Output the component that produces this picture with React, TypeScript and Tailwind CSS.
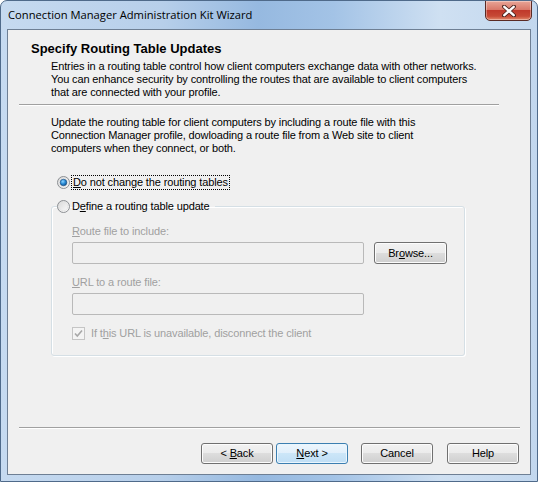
import React from "react";

const Radio = ({ checked }: { checked?: boolean }) => (
  <svg width="13" height="13" viewBox="0 0 13 13" className="shrink-0">
    <defs>
      <linearGradient id={checked ? "rg1" : "rg0"} x1="0" y1="0" x2="1" y2="1">
        <stop offset="0" stopColor="#d6d6d6" />
        <stop offset="1" stopColor="#ffffff" />
      </linearGradient>
      <radialGradient id="dot" cx="0.4" cy="0.35" r="0.7">
        <stop offset="0" stopColor="#8fd3ff" />
        <stop offset="0.5" stopColor="#2b8ed8" />
        <stop offset="1" stopColor="#0b4d8c" />
      </radialGradient>
    </defs>
    <circle cx="6.5" cy="6.5" r="6" fill={`url(#${checked ? "rg1" : "rg0"})`} stroke="#8c8f93" strokeWidth="1" />
    <circle cx="6.5" cy="6.5" r="4.3" fill="none" stroke="#e2e2e2" strokeWidth="0.8" />
    {checked && <circle cx="6.5" cy="6.5" r="3.3" fill="url(#dot)" stroke="#1b4e80" strokeWidth="0.6" />}
  </svg>
);

const Btn = ({ children, def, className = "" }: { children: React.ReactNode; def?: boolean; className?: string }) => (
  <div
    className={`h-[21px] w-[72px] flex items-center justify-center rounded-[3px] border text-[11px] text-black ${
      def
        ? "border-[#3c7fb1] bg-[linear-gradient(#edf6fd_0%,#e0effb_50%,#cce6f8_50%,#bfdef5_100%)] shadow-[inset_0_0_0_1px_#eaf6fd]"
        : "border-[#707070] bg-[linear-gradient(#f2f2f2_0%,#ebebeb_50%,#dddddd_50%,#cfcfcf_100%)] shadow-[inset_0_0_0_1px_#fcfcfc]"
    } ${className}`}
  >
    <span className="whitespace-pre">{children}</span>
  </div>
);

export default function App() {
  return (
    <div
      className="w-[538px] h-[482px] flex flex-col rounded-t-[7px] border border-[#4f6a8a] bg-[linear-gradient(90deg,#c6daf0_0%,#b7cfea_30%,#96b9e0_48%,#a3c3e6_62%,#cfe0f2_82%,#c2d7ee_100%)] overflow-hidden"
      style={{ fontFamily: '"Liberation Sans", Arial, sans-serif' }}
    >
      {/* title bar */}
      <div className="h-[28px] flex items-start shrink-0">
        <div
          className="pl-[7px] pt-[6px] text-[11.2px] leading-[16px] text-black"
          style={{ fontFamily: '"Open Sans", "Liberation Sans", sans-serif' }}
        >
          Connection Manager Administration Kit Wizard
        </div>
        <div className="ml-auto mr-[5px] -mt-px w-[47px] h-[21px] rounded-b-[5px] border border-[#5a2a24] bg-[linear-gradient(#e8a597_0%,#d9796a_45%,#c0392b_50%,#c74a36_80%,#e48c6d_100%)] flex items-center justify-center shadow-[inset_0_0_0_1px_rgba(255,255,255,0.35)]">
          <svg width="14" height="12" viewBox="0 0 14 12">
            <path d="M2 1.5 L12 10.5 M12 1.5 L2 10.5" stroke="#4b2520" strokeWidth="4" strokeLinecap="round" />
            <path d="M2.3 1.8 L11.7 10.2 M11.7 1.8 L2.3 10.2" stroke="#ffffff" strokeWidth="2.4" strokeLinecap="round" />
          </svg>
        </div>
      </div>

      {/* client area */}
      <div className="flex-1 mx-[6px] mb-[6px] border border-[#6e7f94] bg-[#f0f0f0] flex flex-col text-[11px] leading-[13px] tracking-[-0.13px] text-black">
        {/* header */}
        <div className="pl-[23px] pt-[11px] text-[13px] leading-[16px] font-bold tracking-normal">Specify Routing Table Updates</div>
        <div className="pl-[43px] mt-[3px]">
          <div>Entries in a routing table control how client computers exchange data with other networks.</div>
          <div>You can enhance security by controlling the routes that are available to client computers</div>
          <div>that are connected with your profile.</div>
        </div>
        <div className="ml-[11px] w-[480px] mt-[5px] h-[2px] border-t border-[#a0a0a0] border-b border-b-white" />

        {/* body */}
        <div className="pl-[43px] mt-[10px]">
          <div>Update the routing table for client computers by including a route file with this</div>
          <div>Connection Manager profile, dowloading a route file from a Web site to client</div>
          <div>computers when they connect, or both.</div>
        </div>

        <div className="ml-[49px] mt-[19px] h-[16px] flex items-center gap-px">
          <Radio checked />
          <span className="border border-dotted border-black px-px leading-[13px]">
            <u>D</u>o not change the routing tables
          </span>
        </div>

        <fieldset className="ml-[43px] mt-[8px] w-[414px] h-[158px] border border-[#d5dfe5] rounded-[3px] pl-[20px] shadow-[inset_1px_1px_0_#ffffff,1px_1px_0_#ffffff]">
          <legend className="-ml-[15px] pr-[5px] flex items-center gap-px h-[16px]">
            <Radio />
            <span className="pl-px">
              D<u>e</u>fine a routing table update
            </span>
          </legend>
          <div className="text-[#a0a0a0] mt-[11px]">
            <u>R</u>oute file to include:
          </div>
          <div className="flex items-center gap-[10px] mt-[4px]">
            <div className="w-[292px] h-[22px] border border-[#b9b9b9] rounded-[2px] bg-[#f0f0f0]" />
            <Btn className="w-[73px] h-[22px]">
              Br<u>o</u>wse...
            </Btn>
          </div>
          <div className="text-[#a0a0a0] mt-[12px]">
            <u>U</u>RL to a route file:
          </div>
          <div className="w-[292px] h-[22px] mt-[4px] border border-[#b9b9b9] rounded-[2px] bg-[#f0f0f0]" />
          <div className="flex items-center gap-[6px] mt-[12px] text-[#a0a0a0]">
            <svg width="13" height="13" viewBox="0 0 13 13" className="shrink-0">
              <rect x="0.5" y="0.5" width="12" height="12" fill="#f4f4f4" stroke="#c5c5c5" />
              <path d="M3 6.5 L5.3 9 L10 3.5" fill="none" stroke="#a8a8a8" strokeWidth="1.6" />
            </svg>
            <span>
              If t<u>h</u>is URL is unavailable, disconnect the client
            </span>
          </div>
        </fieldset>

        {/* footer */}
        <div className="mt-auto">
          <div className="ml-[11px] w-[501px] h-[2px] border-t border-[#a0a0a0] border-b border-b-white" />
          <div className="flex items-center mt-[14px] mb-[10px] pl-[193px]">
            <Btn>
              {"< "}<u>B</u>ack
            </Btn>
            <Btn def className="ml-[3px]">
              <u>N</u>ext {">"}
            </Btn>
            <Btn className="ml-[13px]">Cancel</Btn>
            <Btn className="ml-[14px]">Help</Btn>
          </div>
        </div>
      </div>
    </div>
  );
}
